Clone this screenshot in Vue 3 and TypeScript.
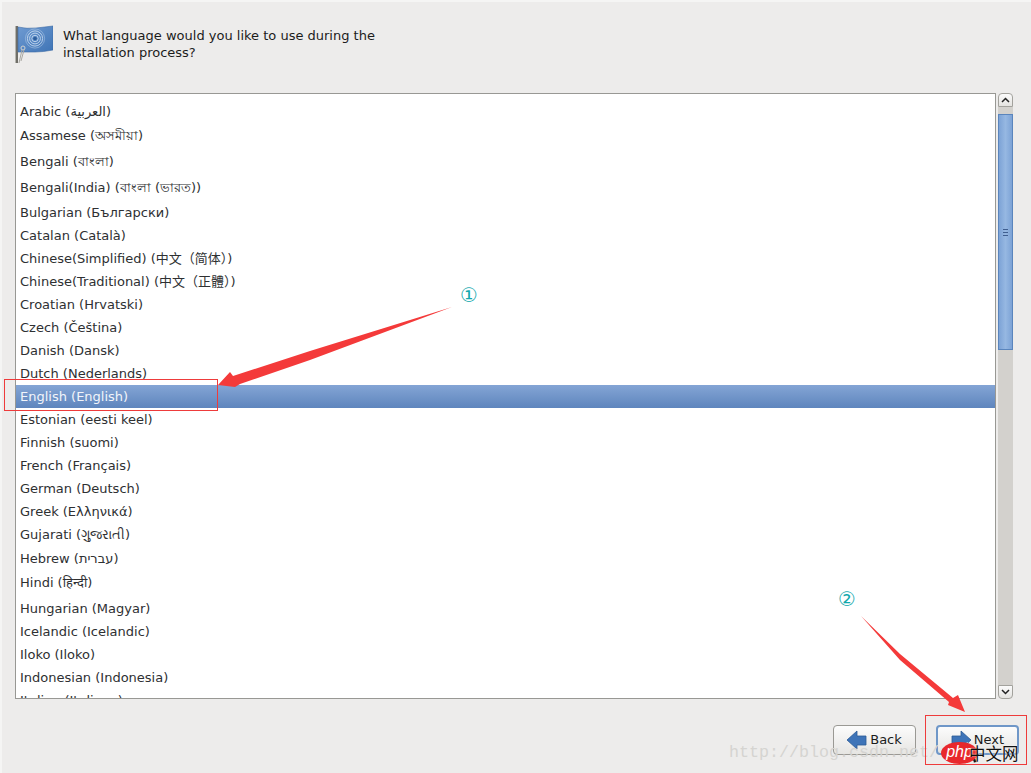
<script setup lang="ts">
interface Lang { label: string; h?: number; pb?: number; selected?: boolean }
const langs: Lang[] = [
  { label: 'Afrikaans (Afrikaans)' },
  { label: 'Arabic (العربية)' },
  { label: 'Assamese (অসমীয়া)', h: 26, pb: 0 },
  { label: 'Bengali (বাংলা)', h: 26, pb: 0 },
  { label: 'Bengali(India) (বাংলা (ভারত))', h: 26, pb: 0 },
  { label: 'Bulgarian (Български)' },
  { label: 'Catalan (Català)' },
  { label: 'Chinese(Simplified) (中文（简体）)', pb: 3 },
  { label: 'Chinese(Traditional) (中文（正體）)', pb: 3 },
  { label: 'Croatian (Hrvatski)' },
  { label: 'Czech (Čeština)' },
  { label: 'Danish (Dansk)' },
  { label: 'Dutch (Nederlands)' },
  { label: 'English (English)', selected: true },
  { label: 'Estonian (eesti keel)' },
  { label: 'Finnish (suomi)' },
  { label: 'French (Français)' },
  { label: 'German (Deutsch)' },
  { label: 'Greek (Ελληνικά)' },
  { label: 'Gujarati (ગુજરાતી)', h: 24 },
  { label: 'Hebrew (עברית)', h: 24 },
  { label: 'Hindi (हिन्दी)', h: 26, pb: 4 },
  { label: 'Hungarian (Magyar)' },
  { label: 'Icelandic (Icelandic)' },
  { label: 'Iloko (Iloko)' },
  { label: 'Indonesian (Indonesia)' },
  { label: 'Italian (Italiano)' },
]
const rowStyle = (l: Lang) => ({ height: `${l.h ?? 23}px`, paddingBottom: `${l.pb ?? 1}px` })
</script>

<template>
  <div class="shell">
    <header class="head">
      <svg class="flag" width="38" height="40" viewBox="0 0 38 40">
        <defs>
          <linearGradient id="fl" x1="0" y1="0" x2="1" y2="1">
            <stop offset="0" stop-color="#6f9bd2" />
            <stop offset="1" stop-color="#3f74b5" />
          </linearGradient>
        </defs>
        <rect x="0" y="1" width="3" height="37" fill="#6f6e68" />
        <rect x="0" y="1" width="1" height="37" fill="#b5b4ae" />
        <path d="M3 2 Q12 4 21 3 T38 1 V25 Q28 27 20 27 T3 27 Z" fill="url(#fl)" stroke="#3a6aa5" stroke-width=".6" />
        <g fill="none" stroke="#c4d8ee" stroke-width=".9">
          <circle cx="20" cy="13.5" r="3.2" />
          <circle cx="20" cy="13.5" r="5.4" />
          <circle cx="20" cy="13.5" r="7.6" />
          <circle cx="20" cy="13.5" r="9.6" stroke-opacity=".5" />
        </g>
        <circle cx="20" cy="13.5" r="1.8" fill="#2f5f9c" />
        <circle cx="8" cy="23" r="2" fill="none" stroke="#d0d0cc" stroke-width="1" />
        <path d="M7 25 L4 38 M9 25 L6 36" stroke="#a9a8a2" stroke-width="1" fill="none" />
      </svg>
      <p class="question">What language would you like to use during the<br />installation process?</p>
    </header>

    <main class="body">
      <div class="list">
        <div class="rows">
          <div
            v-for="l in langs"
            :key="l.label"
            class="row"
            :class="{ selected: l.selected }"
            :style="rowStyle(l)"
          >{{ l.label }}</div>
        </div>
      </div>
      <div class="scrollbar">
        <div class="sb-btn sb-up">
          <svg width="9" height="6" viewBox="0 0 9 6"><path d="M1 5 L4.5 1.5 L8 5" fill="none" stroke="#222" stroke-width="1.5" /></svg>
        </div>
        <div class="trough">
          <div class="thumb"><i></i><i></i><i></i></div>
        </div>
        <div class="sb-btn sb-down">
          <svg width="9" height="6" viewBox="0 0 9 6"><path d="M1 1 L4.5 4.5 L8 1" fill="none" stroke="#222" stroke-width="1.5" /></svg>
        </div>
      </div>
    </main>

    <footer class="foot">
      <button class="btn">
        <svg width="20" height="20" viewBox="0 0 20 20"><path d="M0 10 L10 1 V6 H19 V15 H10 V19 Z" fill="#3e74b8" stroke="#2b5a96" stroke-width=".8" /></svg>
        <span>Back</span>
      </button>
      <button class="btn btn-default">
        <svg width="20" height="20" viewBox="0 0 20 20"><path d="M20 10 L10 1 V6 H1 V15 H10 V19 Z" fill="#3e74b8" stroke="#2b5a96" stroke-width=".8" /></svg>
        <span>Next</span>
      </button>
    </footer>

    <span class="watermark">http://blog.csdn.net/</span>
    <svg class="marks" width="1031" height="773" viewBox="0 0 1031 773">
      <rect x="4.5" y="379.5" width="213" height="31" fill="none" stroke="#ee3b3b" />
      <rect x="925.5" y="715.5" width="101" height="49" fill="none" stroke="#ee3b3b" />
      <path d="M452 307 L310 351 L233 376 L230 372 L218 385 L235 387 L240 384 L310 360 Z" fill="#f43a3a" />
      <path d="M861 616 L900 654 L953 698 L958 695 L965 712 L948 705 L949 702 L900 660 Z" fill="#f43a3a" />
      <path d="M967 742 V760 L971 756 L974 763 L977 762 L974 755 L980 755 Z" fill="#111" stroke="#fff" stroke-width=".5" />
    </svg>
    <span class="circled c1">①</span>
    <span class="circled c2">②</span>
    <span class="php">php</span>
    <span class="cn">中文网</span>
  </div>
</template>

<style>
html, body { margin: 0; padding: 0; }
</style>

<style scoped>
.shell {
  position: relative;
  box-sizing: border-box;
  width: 1031px;
  height: 773px;
  overflow: hidden;
  background: #edeceb;
  padding: 25px 18px 0 15px;
  display: flex;
  flex-direction: column;
  font-family: "DejaVu Sans", "Noto Sans", "Noto Sans CJK SC", sans-serif;
  color: #2a2a2a;
  box-shadow: inset 2px 2px 0 #f5f5f4;
}
.head {
  display: flex;
  height: 68px;
  gap: 10px;
  flex: none;
}
.flag { flex: none; }
.question {
  margin: 2px 0 0;
  font-size: 13px;
  line-height: 17px;
  color: #1c1c1c;
}
.body {
  display: flex;
  gap: 2px;
  height: 606px;
  flex: none;
}
.list {
  box-sizing: border-box;
  width: 981px;
  height: 606px;
  border: 1px solid #989894;
  background: #fff;
  overflow: hidden;
}
.rows { margin-top: -17px; }
.row {
  box-sizing: border-box;
  padding-left: 4px;
  display: flex;
  align-items: center;
  white-space: pre;
  font-size: 13px;
  color: #2e3032;
}
.row.selected {
  background: linear-gradient(#84a5d5, #5e85bd);
  color: #f2f5fa;
}
.scrollbar {
  width: 15px;
  height: 606px;
  display: flex;
  flex-direction: column;
  flex: none;
}
.sb-btn {
  flex: none;
  box-sizing: border-box;
  height: 14px;
  border: 1px solid #a3a29d;
  background: linear-gradient(#fbfbfb, #e4e3e0);
  display: flex;
  align-items: center;
  justify-content: center;
}
.sb-up { border-radius: 4px 4px 0 0; }
.sb-down { border-radius: 0 0 4px 4px; }
.trough {
  flex: 1;
  background: #d3d1cd;
  padding-top: 7px;
}
.thumb {
  box-sizing: border-box;
  height: 236px;
  border: 1px solid #5a85bd;
  background: linear-gradient(90deg, #7da3d6, #96b8e2 50%, #7da3d6);
  display: flex;
  flex-direction: column;
  align-items: center;
  justify-content: center;
  gap: 2px;
}
.thumb i {
  display: block;
  width: 5px;
  height: 1px;
  background: #3f5f90;
}
.foot {
  display: flex;
  justify-content: flex-end;
  gap: 20px;
  margin-top: 26px;
  margin-right: -6px;
}
.btn {
  box-sizing: border-box;
  width: 83px;
  height: 30px;
  border: 1px solid #9a9994;
  border-radius: 4px;
  background: linear-gradient(#fcfcfc, #e6e5e2);
  display: flex;
  align-items: center;
  justify-content: center;
  gap: 3px;
  padding: 0 0 1px;
  font-family: inherit;
  font-size: 13px;
  color: #1c1c1c;
}
.btn-default {
  border: 2px solid #6f97c8;
}
.marks {
  position: absolute;
  left: 0;
  top: 0;
  pointer-events: none;
}
.circled {
  position: absolute;
  color: #12a8ad;
  font-size: 20px;
  line-height: 20px;
  font-family: "DejaVu Sans", sans-serif;
}
.c1 { left: 460px; top: 285px; }
.c2 { left: 838px; top: 589px; }
.watermark {
  position: absolute;
  left: 729px;
  top: 744px;
  font-family: "Liberation Mono", monospace;
  font-size: 16.67px;
  line-height: 18px;
  color: #d5d4d1;
  white-space: pre;
}
.php {
  position: absolute;
  left: 941px;
  top: 742px;
  width: 37px;
  height: 22px;
  border-radius: 50%;
  background: #e8282c;
  color: #fff;
  text-align: center;
  font: italic 16px/19px "Liberation Sans", sans-serif;
}
.cn {
  position: absolute;
  left: 969px;
  top: 743px;
  font-family: "Noto Sans CJK SC", sans-serif;
  font-size: 16.5px;
  line-height: 20px;
  font-weight: 400;
  color: #111;
  text-shadow: 0 0 2px #fff;
  white-space: pre;
}
</style>
